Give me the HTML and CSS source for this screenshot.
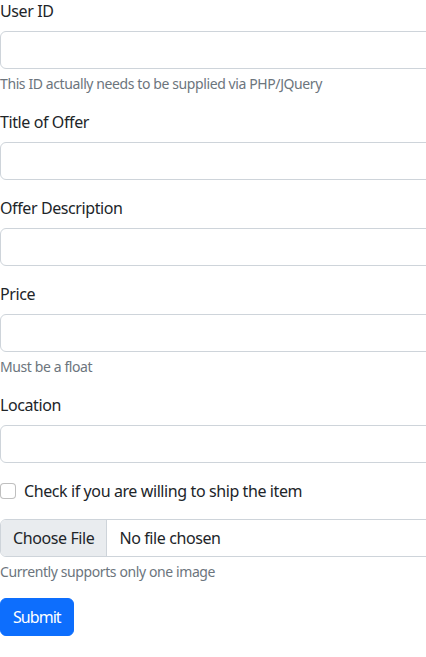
FILE: index.html
```html
<!DOCTYPE html>
<html lang="en">
<head>
<meta charset="utf-8">
<title>Offer form</title>
<link rel="stylesheet" href="styles.css">
</head>
<body>
<div class="frame">
<form class="offer-form">
  <div class="field">
    <label class="form-label" for="uid">User ID</label>
    <input class="form-control" id="uid" type="text">
    <div class="form-text">This ID actually needs to be supplied via PHP/JQuery</div>
  </div>
  <div class="field">
    <label class="form-label" for="title">Title of Offer</label>
    <input class="form-control" id="title" type="text">
  </div>
  <div class="field">
    <label class="form-label" for="desc">Offer Description</label>
    <input class="form-control" id="desc" type="text">
  </div>
  <div class="field">
    <label class="form-label" for="price">Price</label>
    <input class="form-control" id="price" type="text">
    <div class="form-text">Must be a float</div>
  </div>
  <div class="field">
    <label class="form-label" for="loc">Location</label>
    <input class="form-control" id="loc" type="text">
  </div>
  <div class="field form-check">
    <span class="check-box"></span>
    <label class="check-label">Check if you are willing to ship the item</label>
  </div>
  <div class="field">
    <div class="file-control">
      <span class="file-btn">Choose File</span>
      <span class="file-name">No file chosen</span>
    </div>
    <div class="form-text">Currently supports only one image</div>
  </div>
  <button class="btn-submit" type="button">Submit</button>
</form>
</div>
</body>
</html>
```
FILE: styles.css
```css
html, body {
  margin: 0;
  padding: 0;
  background: #fff;
}
body {
  font-family: "Noto Sans", "Open Sans", sans-serif;
  font-size: 16px;
  line-height: 1.5;
  letter-spacing: -0.025em;
  color: #212529;
}
.frame {
  width: 426px;
  overflow: hidden;
}
.offer-form {
  width: 460px;
  margin-top: -1px;
  display: flex;
  flex-direction: column;
  align-items: flex-start;
}
.field {
  width: 100%;
  margin-bottom: 16px;
  display: flex;
  flex-direction: column;
}
.form-label {
  margin-bottom: 8px;
  display: block;
}
.form-control {
  box-sizing: border-box;
  width: 100%;
  height: 38px;
  padding: 6px 12px;
  font: inherit;
  color: #212529;
  background: #fff;
  border: 1px solid #ced4da;
  border-radius: 6px;
  margin: 0;
}
.form-text {
  margin-top: 4px;
  font-size: 14px;
  line-height: 21px;
  color: #6c757d;
}
.form-check {
  flex-direction: row;
  align-items: flex-start;
  min-height: 24px;
}
.check-box {
  box-sizing: border-box;
  width: 16px;
  height: 16px;
  margin-top: 4px;
  border: 1px solid rgba(0,0,0,.25);
  border-radius: 4px;
  background: #fff;
  flex: none;
}
.check-label {
  padding-left: 8px;
}
.file-control {
  box-sizing: border-box;
  height: 38px;
  display: flex;
  align-items: stretch;
  border: 1px solid #ced4da;
  border-radius: 6px;
  overflow: hidden;
  background: #fff;
}
.file-btn {
  display: flex;
  align-items: center;
  padding: 0 12px;
  background: #e9ecef;
  border-right: 1px solid #ced4da;
}
.file-name {
  display: flex;
  align-items: center;
  padding-left: 12px;
}
.btn-submit {
  font: inherit;
  letter-spacing: -0.06em;
  color: #fff;
  background: #0d6efd;
  border: 1px solid #0d6efd;
  border-radius: 6px;
  padding: 6px 12px;
  height: 38px;
  cursor: pointer;
}
```
